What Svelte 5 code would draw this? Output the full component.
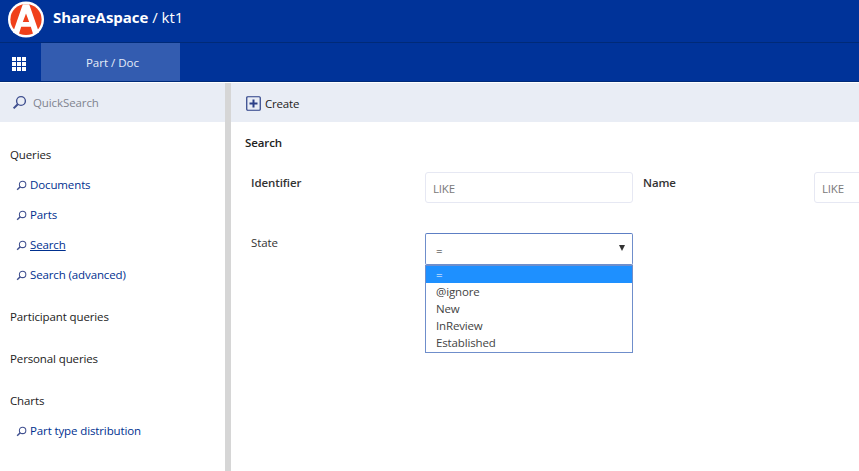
<script>
  const queries = ['Documents', 'Parts', 'Search', 'Search (advanced)'];
  const options = ['=', '@ignore', 'New', 'InReview', 'Established'];
</script>

{#snippet lens(size)}
  <svg class="lens" width={size} height={size} viewBox="0 0 14 14" fill="none" stroke="#3f4f8f" aria-hidden="true">
    <circle cx="8.4" cy="5.6" r="4.1" stroke-width="1.3" />
    <path d="M5.4 8.6 1.5 12.5" stroke-width="1.9" />
  </svg>
{/snippet}

<div class="page">
  <header class="top">
    <svg class="logo" width="36" height="37" viewBox="0 0 36 37" aria-hidden="true">
      <circle cx="18" cy="18.5" r="18" fill="#fff" />
      <circle cx="18" cy="18.5" r="15.6" fill="#f0401a" />
      <path d="M14.8 3.2h6.4L31 31.5l-5.6 2.6-2.6-8.3h-9.6l-2.6 8.3L5 31.5zM18 12.5l-3.2 8.6h6.4z" fill="#fff" fill-rule="evenodd" />
    </svg>
    <div class="title"><b>ShareAspace</b> <span>/ kt1</span></div>
  </header>
  <nav class="tabs">
    <div class="apps" aria-hidden="true">
      {#each Array(9) as _}<i></i>{/each}
    </div>
    <div class="tab">Part / Doc</div>
  </nav>
  <div class="body">
    <aside class="side">
      <div class="quick">
        {@render lens(15)}
        <span>QuickSearch</span>
      </div>
      <div class="tree">
        <h3 class="first">Queries</h3>
        {#each queries as q}
          <div class="item">
            {@render lens(11)}
            <a href="#q" class:active={q === 'Search'}>{q}</a>
          </div>
        {/each}
        <h3>Participant queries</h3>
        <h3>Personal queries</h3>
        <h3>Charts</h3>
        <div class="item">
          {@render lens(11)}
          <a href="#q">Part type distribution</a>
        </div>
      </div>
    </aside>
    <div class="split"></div>
    <main class="main">
      <div class="toolbar">
        <svg width="15" height="15" viewBox="0 0 15 15" fill="none" aria-hidden="true">
          <rect x=".75" y=".75" width="13.5" height="13.5" rx="1" stroke="#2b3f86" stroke-width="1.2" />
          <path d="M7.5 3.5v8M3.5 7.5h8" stroke="#2b3f86" stroke-width="2" />
        </svg>
        <span>Create</span>
      </div>
      <h2>Search</h2>
      <div class="form">
        <div class="lab">Identifier</div>
        <div class="input">LIKE</div>
        <div class="lab name">Name</div>
        <div class="input">LIKE</div>
        <div class="lab state">State</div>
        <div class="selwrap">
          <div class="select"><span>=</span><em></em></div>
          <ul class="menu">
            {#each options as o, i}
              <li class:sel={i === 0}>{o}</li>
            {/each}
          </ul>
        </div>
      </div>
    </main>
  </div>
</div>

<style>
  :global(body) {
    margin: 0;
    background: #fff;
  }
  .page {
    width: 859px;
    height: 471px;
    overflow: hidden;
    display: flex;
    flex-direction: column;
    font-family: "Open Sans", "Noto Sans", sans-serif;
    font-size: 11.5px;
    color: #222;
  }
  .top {
    height: 42px;
    background: #003399;
    border-bottom: 1px solid #002a78;
    display: flex;
    align-items: center;
    padding-left: 8px;
    gap: 9px;
    color: #fff;
    flex: none;
  }
  .logo {
    margin-top: -3px;
  }
  .title {
    font-size: 15px;
    margin-top: -8px;
    white-space: pre;
  }
  .title b {
    font-weight: 700;
    letter-spacing: -0.05px;
  }
  .tabs {
    height: 38px;
    background: #003399;
    border-bottom: 1px solid #002a78;
    display: flex;
    flex: none;
    margin-bottom: 1px;
  }
  .apps {
    width: 14px;
    height: 14px;
    margin: 14px 15px 0 12px;
    display: grid;
    grid-template-columns: repeat(3, 4px);
    grid-auto-rows: 4px;
    gap: 1px;
  }
  .apps i {
    background: #fff;
  }
  .tab {
    width: 139px;
    box-sizing: border-box;
    padding-left: 4px;
    background: #335cb0;
    color: #e6ecf8;
    text-align: center;
    line-height: 39px;
    height: 38px;
  }
  .body {
    flex: 1;
    display: flex;
    min-height: 0;
  }
  .side {
    width: 225px;
    flex: none;
  }
  .quick {
    height: 39px;
    background: #e9edf5;
    display: flex;
    align-items: center;
    padding-left: 12px;
    gap: 6px;
    color: #80848f;
    letter-spacing: -0.1px;
  }
  .tree {
    padding: 24px 0 0 10px;
  }
  h3 {
    font: inherit;
    margin: 24px 0 0;
    height: 18px;
    line-height: 18px;
    letter-spacing: -0.12px;
  }
  h3.first {
    margin-top: 0;
  }
  .item {
    height: 18px;
    line-height: 18px;
    margin-top: 12px;
    padding-left: 6px;
    display: flex;
    align-items: center;
    gap: 3px;
    letter-spacing: -0.12px;
  }
  .item a {
    color: #00308f;
    text-decoration: none;
  }
  .item a.active {
    text-decoration: underline;
  }
  .split {
    width: 6px;
    flex: none;
    background: #d6d6d6;
  }
  .main {
    flex: 1;
    min-width: 0;
    overflow: hidden;
  }
  .toolbar {
    height: 39px;
    background: #e9edf5;
    display: flex;
    align-items: center;
    padding: 2px 0 0 15px;
    box-sizing: border-box;
    gap: 4px;
    letter-spacing: -0.2px;
  }
  h2 {
    font: inherit;
    font-weight: 600;
    margin: 12px 0 0 14px;
    line-height: 18px;
    height: 18px;
    letter-spacing: -0.1px;
  }
  .form {
    display: grid;
    grid-template-columns: 174px 208px 181px 208px;
    grid-template-rows: 31px 32px;
    row-gap: 30px;
    margin: 20px 0 0 20px;
    width: 800px;
  }
  .lab {
    font-weight: 600;
    color: #333;
    line-height: 18px;
    padding-top: 2px;
    letter-spacing: -0.1px;
  }
  .lab.name {
    padding-left: 10px;
  }
  .lab.state {
    font-weight: 400;
    padding-top: 1px;
  }
  .input {
    box-sizing: border-box;
    border: 1px solid #e6e8f3;
    border-radius: 3px;
    color: #7a7a7a;
    padding: 7px 7px 0;
    line-height: 18px;
    letter-spacing: -0.2px;
  }
  .selwrap {
    position: relative;
  }
  .select {
    box-sizing: border-box;
    height: 32px;
    border: 1px solid #6f8ecb;
    border-top-color: #5d7fc4;
    border-radius: 2px;
    display: flex;
    align-items: center;
    justify-content: space-between;
    padding: 2px 8px 0 10px;
    color: #222;
  }
  .select em {
    width: 0;
    height: 0;
    border: 3px solid transparent;
    border-top: 6px solid #333;
    border-bottom: 0;
    margin-right: -1px;
    margin-top: -5px;
  }
  .menu {
    position: absolute;
    left: 0;
    top: 32px;
    width: 208px;
    box-sizing: border-box;
    margin: 0;
    padding: 0 0 1px;
    list-style: none;
    border: 1px solid #6f8ecb;
    background: #fff;
    color: #444;
  }
  .menu li {
    height: 17px;
    line-height: 17px;
    padding-left: 10px;
    letter-spacing: -0.15px;
  }
  .menu li.sel {
    background: #1e90ff;
    color: #fff;
  }
</style>
